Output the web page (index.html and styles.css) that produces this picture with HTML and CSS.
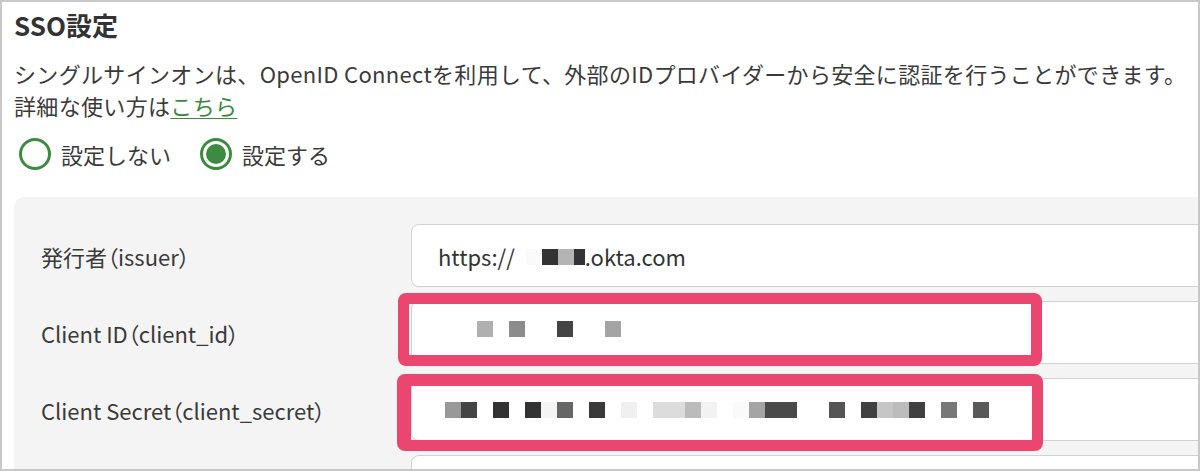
FILE: index.html
```html
<!DOCTYPE html>
<html lang="ja">
<head>
<meta charset="utf-8">
<title>SSO設定</title>
<link rel="stylesheet" href="styles.css">
</head>
<body>
<div class="frame">
  <h2 class="title">SSO設定</h2>
  <p class="desc">シングルサインオンは、OpenID Connectを利用して、外部のIDプロバイダーから安全に認証を行うことができます。<br>詳細な使い方は<a class="link" href="#">こちら</a></p>
  <div class="radios">
    <label class="radio">
      <svg class="radio-icon" width="32" height="32" viewBox="0 0 32 32"><circle cx="16" cy="16" r="14.5" fill="#fff" stroke="#3d8b40" stroke-width="3"/></svg>
      <span>設定しない</span>
    </label>
    <label class="radio">
      <svg class="radio-icon" width="32" height="32" viewBox="0 0 32 32"><circle cx="16" cy="16" r="14.5" fill="#fff" stroke="#3d8b40" stroke-width="3"/><circle cx="16" cy="16" r="10" fill="#3d8b40"/></svg>
      <span>設定する</span>
    </label>
  </div>
  <div class="panel">
    <div class="row">
      <div class="label">発行者（issuer）</div>
      <div class="input"><span>https://</span><svg class="mosaic-inline" width="70" height="16" viewBox="0 0 70 16"><rect x="11" y="0" width="16" height="16" fill="#fafafa"/><rect x="27" y="0" width="16" height="16" fill="#333"/><rect x="43" y="0" width="16" height="16" fill="#b4b4b4"/><rect x="59" y="0" width="11" height="16" fill="#333"/></svg><span>.okta.com</span></div>
    </div>
    <div class="row">
      <div class="label">Client ID（client_id）</div>
      <div class="input"><svg class="mosaic id" width="200" height="24" viewBox="0 0 200 24"><rect x="39" y="0" width="16" height="16" fill="#b0b0b0"/><rect x="71" y="0" width="16" height="16" fill="#8c8c8c"/><rect x="119" y="0" width="16" height="16" fill="#444"/><rect x="167" y="0" width="16" height="16" fill="#a4a4a4"/></svg></div>
    </div>
    <div class="row">
      <div class="label">Client Secret（client_secret）</div>
      <div class="input"><svg class="mosaic" width="560" height="16" viewBox="0 0 560 16"><rect x="7" y="0" width="16" height="16" fill="#999"/><rect x="23" y="0" width="16" height="16" fill="#444"/><rect x="55" y="0" width="16" height="16" fill="#333"/><rect x="87" y="0" width="16" height="16" fill="#333"/><rect x="103" y="0" width="16" height="16" fill="#f4f4f4"/><rect x="119" y="0" width="16" height="16" fill="#666"/><rect x="151" y="0" width="16" height="16" fill="#3a3a3a"/><rect x="183" y="0" width="16" height="16" fill="#f0f0f0"/><rect x="215" y="0" width="32" height="16" fill="#dcdcdc"/><rect x="247" y="0" width="16" height="16" fill="#bbb"/><rect x="263" y="0" width="16" height="16" fill="#f2f2f2"/><rect x="295" y="0" width="16" height="16" fill="#fafafa"/><rect x="311" y="0" width="16" height="16" fill="#a4a4a4"/><rect x="327" y="0" width="16" height="16" fill="#4a4a4a"/><rect x="343" y="0" width="16" height="16" fill="#4a4a4a"/><rect x="391" y="0" width="16" height="16" fill="#555"/><rect x="423" y="0" width="16" height="16" fill="#404040"/><rect x="439" y="0" width="16" height="16" fill="#c6c6c6"/><rect x="455" y="0" width="16" height="16" fill="#bcbcbc"/><rect x="471" y="0" width="16" height="16" fill="#404040"/><rect x="503" y="0" width="16" height="16" fill="#777"/><rect x="535" y="0" width="16" height="16" fill="#595959"/></svg></div>
    </div>
    <div class="row">
      <div class="label"></div>
      <div class="input"></div>
    </div>
  </div>
  <div class="highlight highlight-id"></div>
  <div class="highlight highlight-secret"></div>
</div>
</body>
</html>
```

FILE: styles.css
```css
html, body {
  margin: 0;
  padding: 0;
  background: #fff;
}

body {
  font-family: "Noto Sans CJK JP", "Noto Sans", sans-serif;
  color: #333;
}

.frame {
  position: relative;
  box-sizing: border-box;
  width: 1200px;
  height: 471px;
  border: 2px solid #c8c8c8;
  padding: 5px 12px 0 12px;
  overflow: hidden;
}

.title {
  margin: 0;
  font-size: 26px;
  line-height: 36px;
  font-weight: 700;
  color: #333;
}

.desc {
  margin: 14px 0 0;
  font-size: 22px;
  line-height: 32px;
  letter-spacing: 0.33px;
  white-space: nowrap;
  color: #3a3a3a;
}

.link {
  color: #3a8a3c;
  text-decoration: underline;
  text-underline-offset: 3px;
  text-decoration-thickness: 1px;
}

.radios {
  margin-top: 17px;
  display: flex;
  align-items: center;
  gap: 29px;
  height: 32px;
  padding-left: 5px;
}

.radio {
  display: flex;
  align-items: center;
  gap: 10px;
  font-size: 22px;
  line-height: 32px;
  color: #3a3a3a;
}

.radio-icon {
  display: block;
}

.panel {
  margin-top: 27px;
  margin-right: -80px;
  background: #f4f4f4;
  border-radius: 10px;
  padding: 27px 0 0 27px;
  display: grid;
  grid-template-columns: 370px 1fr;
  row-gap: 14px;
}

.row {
  display: contents;
}

.label {
  display: flex;
  align-items: center;
  font-size: 22px;
  color: #3a3a3a;
  font-feature-settings: "palt";
}

.input {
  box-sizing: border-box;
  height: 63px;
  background: #fff;
  border: 1px solid #d2d2d2;
  border-radius: 8px;
  padding-left: 26px;
  display: flex;
  align-items: center;
  font-size: 22px;
  color: #333;
}

.mosaic-inline {
  display: block;
  margin-top: 3px;
}

.mosaic {
  display: block;
}

.highlight {
  position: absolute;
  box-sizing: border-box;
  border: 11px solid #ea4670;
  border-radius: 8px;
}

.highlight-id {
  left: 396px;
  top: 291px;
  width: 644px;
  height: 73px;
}

.highlight-secret {
  left: 395px;
  top: 372px;
  width: 646px;
  height: 77px;
  border-width: 12px 11px 11px 14px;
}
```
